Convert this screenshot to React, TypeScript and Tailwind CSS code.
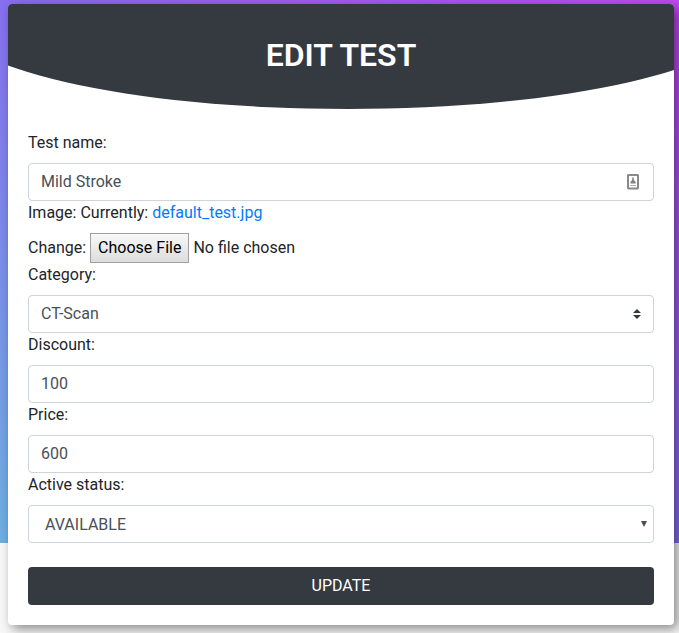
import type { ReactNode } from "react";

const control =
  "block h-[38px] w-full rounded border border-[#ced4da] bg-white px-3 text-base text-[#495057] outline-none focus:border-[#80bdff]";

function Field({ id, label, children }: { id: string; label: string; children: ReactNode }) {
  return (
    <div>
      <label htmlFor={id} className="mb-2 block">
        {label}
      </label>
      <div className="relative">{children}</div>
    </div>
  );
}

function CardHeader() {
  return (
    <header className="relative overflow-hidden rounded-t pt-8 pb-[35px] text-center">
      <div className="absolute bottom-0 -left-[9%] h-[184px] w-[120%] rounded-[50%] bg-[#343a40]" />
      <h2 className="relative text-[32px] leading-[38px] font-semibold text-white">EDIT TEST</h2>
    </header>
  );
}

function ContactIcon() {
  return (
    <svg
      className="pointer-events-none absolute top-[11px] right-[15px]"
      width="12"
      height="16"
      viewBox="0 0 12 16"
      fill="none"
      aria-hidden="true"
    >
      <rect x="1" y="1" width="10" height="13.5" rx="0.4" stroke="#8a8a8a" strokeWidth="2" />
      <path d="M5.2 3.5 H6.8 V6 L8.6 8 V9.4 H3.4 V8 L5.2 6 Z" fill="#808080" />
      <path d="M3 11.5 H9" stroke="#b0b0b0" strokeWidth="1" />
    </svg>
  );
}

export default function App() {
  return (
    <main className="min-h-screen bg-[#f8f8f8] bg-[linear-gradient(to_top_right,#6eb0e2,#876ff0_50%,#c048f2)] bg-[length:100%_543px] bg-no-repeat pt-1 pr-[5px] pb-2 pl-2 font-['Roboto',sans-serif] text-base text-[#212529]">
      <section className="rounded bg-white shadow-[4px_4px_12px_rgba(0,0,0,0.45)]">
        <CardHeader />
        <form className="px-5 pt-[22px] pb-5" onSubmit={(e) => e.preventDefault()}>
          <Field id="name" label="Test name:">
            <input id="name" type="text" defaultValue="Mild Stroke" className={`${control} pb-0.5`} />
            <ContactIcon />
          </Field>

          <div>
            <p className="mb-2">
              <label htmlFor="image">Image:</label> Currently:{" "}
              <a href="#default_test" className="text-[#007bff]">
                default_test.jpg
              </a>
            </p>
            <div className="flex h-[30px] items-center gap-1">
              <span>Change:</span>
              <input
                id="image"
                type="file"
                className="h-[30px] min-w-0 flex-1 file:mr-1 file:h-[30px] file:border file:border-solid file:border-[#a0a0a0] file:bg-linear-to-b file:from-[#f8f8f8] file:to-[#dddddd] file:px-[7px] file:text-black"
              />
            </div>
          </div>

          <Field id="category" label="Category:">
            <select id="category" className={`${control} appearance-none`}>
              <option>CT-Scan</option>
            </select>
            <svg
              className="pointer-events-none absolute top-[14px] right-[13px]"
              width="8"
              height="10"
              viewBox="0 0 4 5"
              fill="#343a40"
              aria-hidden="true"
            >
              <path d="M2 0 L0 2 H4 Z M2 5 L0 3 H4 Z" />
            </svg>
          </Field>

          <Field id="discount" label="Discount:">
            <input id="discount" type="text" inputMode="numeric" defaultValue="100" className={`${control} pb-0.5`} />
          </Field>

          <Field id="price" label="Price:">
            <input id="price" type="text" inputMode="numeric" defaultValue="600" className={`${control} pb-0.5`} />
          </Field>

          <Field id="status" label="Active status:">
            <select id="status" className={`${control} appearance-none pt-0.5 indent-1`}>
              <option>AVAILABLE</option>
              <option>UNAVAILABLE</option>
            </select>
            <svg
              className="pointer-events-none absolute top-4 right-[7px]"
              width="6"
              height="6"
              viewBox="0 0 6 6"
              fill="#495057"
              aria-hidden="true"
            >
              <path d="M0 0 H6 L3 6 Z" />
            </svg>
          </Field>

          <button type="submit" className="mt-6 block h-[38px] w-full rounded bg-[#343a40] text-white">
            UPDATE
          </button>
        </form>
      </section>
    </main>
  );
}
